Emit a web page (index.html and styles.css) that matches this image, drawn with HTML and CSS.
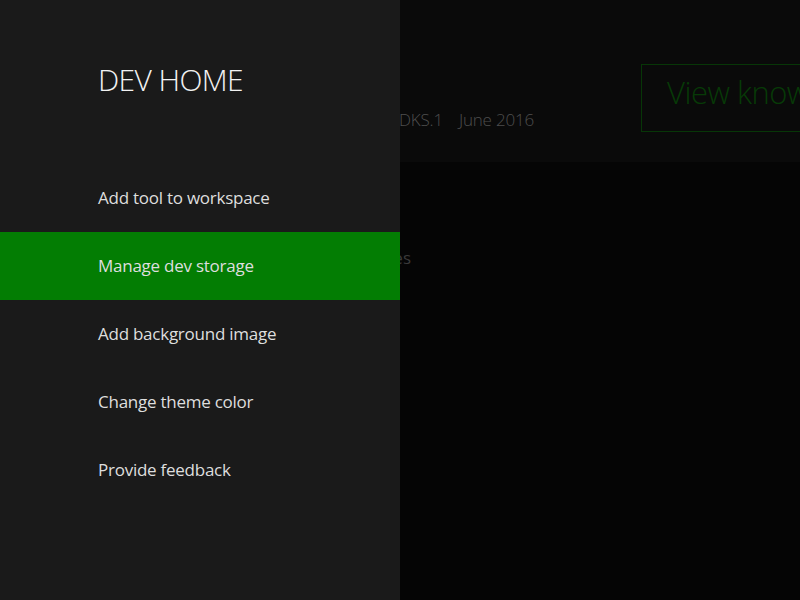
FILE: index.html
```html
<!DOCTYPE html>
<html lang="en">
<head>
<meta charset="utf-8">
<title>Dev Home</title>
<link rel="stylesheet" href="styles.css">
</head>
<body>
<div class="page">
  <header class="hero">
    <div class="hero-row">
      <div class="hero-info"><span>Xbox One Developer Kit&nbsp;&nbsp;&nbsp;10.0.14393.2020 XDKS.1</span><span class="date">June 2016</span></div>
      <div class="know-btn">View known issues</div>
    </div>
  </header>
  <section class="content">
    <div class="content-line">Manage game packages</div>
  </section>

  <nav class="panel">
    <h1 class="panel-title">DEV HOME</h1>
    <ul class="menu">
      <li class="menu-item">Add tool to workspace</li>
      <li class="menu-item active">Manage dev storage</li>
      <li class="menu-item">Add background image</li>
      <li class="menu-item">Change theme color</li>
      <li class="menu-item">Provide feedback</li>
    </ul>
  </nav>
</div>
</body>
</html>
```

FILE: styles.css
```css
* { box-sizing: border-box; }
html, body { margin: 0; padding: 0; }
body {
  width: 800px;
  height: 600px;
  overflow: hidden;
  background: #050505;
  font-family: "Open Sans", "Noto Sans", sans-serif;
}
.page {
  position: relative;
  width: 800px;
  height: 600px;
  overflow: hidden;
}
.hero {
  height: 162px;
  background: #0a0a0a;
  padding-top: 64px;
}
.hero-row {
  display: flex;
  align-items: flex-start;
}
.hero-info {
  width: 534px;
  flex: none;
  display: flex;
  justify-content: flex-end;
  white-space: nowrap;
  overflow: hidden;
  margin-top: 44px;
  font-size: 17px;
  font-weight: 300;
  letter-spacing: -0.2px;
  color: #4e4e4e;
}
.hero-info .date { margin-left: 16px; }
.know-btn {
  margin-left: 107px;
  flex: none;
  height: 68px;
  padding: 0 25px;
  border: 1px solid #073607;
  color: #073a07;
  font-size: 31px;
  font-weight: 300;
  letter-spacing: -0.5px;
  line-height: 54px;
  white-space: nowrap;
}
.content {
  padding-top: 84px;
}
.content-line {
  width: 411px;
  text-align: right;
  white-space: nowrap;
  font-size: 17px;
  color: #3a3a3a;
}
.panel {
  position: absolute;
  left: 0;
  top: 0;
  width: 400px;
  height: 600px;
  background: #1a1a1a;
  padding-top: 58px;
}
.panel-title {
  margin: 0 0 0 98px;
  height: 106px;
  font-size: 30px;
  font-weight: 300;
  letter-spacing: -0.6px;
  color: #f2f2f2;
  line-height: 44px;
}
.menu {
  list-style: none;
  margin: 0;
  padding: 0;
}
.menu-item {
  height: 68px;
  display: flex;
  align-items: center;
  padding-left: 98px;
  padding-bottom: 2px;
  font-size: 17px;
  letter-spacing: -0.25px;
  color: #dedede;
}
.menu-item.active {
  background: #037d03;
}
```
